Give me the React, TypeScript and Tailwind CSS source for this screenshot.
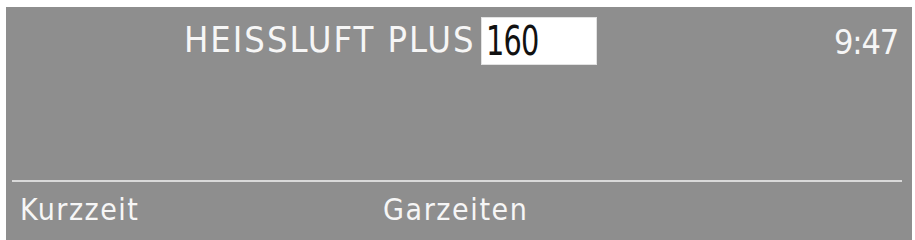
export default function App() {
  const font = { fontFamily: '"Liberation Sans Narrow", "DejaVu Sans Condensed", "Liberation Sans", sans-serif' }

  return (
    <div className="w-[915px] h-[240px] bg-white pt-[7px] pl-[6px]" style={font}>
      <div className="w-[906px] h-[233px] bg-[#8e8e8e] flex flex-col text-[#f6f6f6]">
        {/* Top row: program name, temperature field, clock */}
        <div className="flex items-center pt-[10px] pl-[178px] pr-[14px] h-[58px]">
          <span className="text-[36px] leading-none tracking-[2px] pb-[2px]">HEISSLUFT PLUS</span>
          <div className="ml-[5px] w-[116px] h-[48px] bg-white border border-[#e2e2e2] flex items-center pl-[4px] overflow-hidden">
            <span className="inline-block origin-left scale-x-[0.8] text-[40px] leading-none text-[#111] tracking-[-1px]">160</span>
          </div>
          <span className="ml-auto text-[34px] leading-none tracking-[-1.2px] pt-[2px]">9:47</span>
        </div>

        <div className="flex-1" />

        <div className="ml-[6px] mr-[10px] h-[2px] bg-[#d9d9d9]" />

        {/* Bottom softkey labels */}
        <div className="flex items-start h-[58px] pt-[13px] pl-[14px]">
          <span className="w-[363px] text-[30px] leading-none tracking-[1.5px]">Kurzzeit</span>
          <span className="text-[30px] leading-none tracking-[1.6px]">Garzeiten</span>
        </div>
      </div>
    </div>
  )
}
